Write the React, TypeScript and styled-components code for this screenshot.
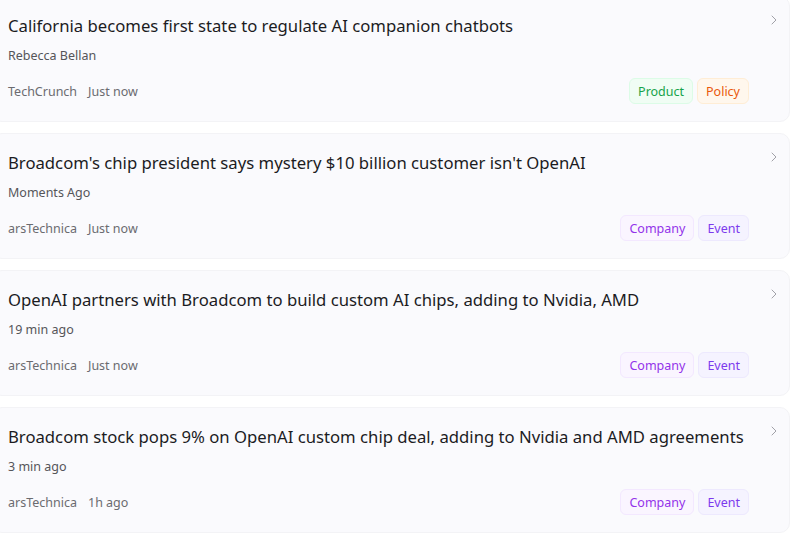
import styled, { createGlobalStyle } from 'styled-components';
import { ChevronRight } from 'lucide-react';

const GlobalStyle = createGlobalStyle`
    body {
        margin: 0;
        background: #ffffff;
        font-family: "Noto Sans", "Open Sans", sans-serif;
        overflow: hidden;
    }
`;

type Tone = 'green' | 'orange' | 'purple' | 'violet';

const tones: Record<Tone, { bg: string; border: string; color: string }> = {
    green: { bg: '#f0fdf4', border: '#dcfce7', color: '#16a34a' },
    orange: { bg: '#fff7ed', border: '#ffedd5', color: '#ea580c' },
    purple: { bg: '#faf5ff', border: '#f3e8ff', color: '#9333ea' },
    violet: { bg: '#f5f3ff', border: '#ede9fe', color: '#7c3aed' },
};

const tagTone: Record<string, Tone> = {
    Product: 'green',
    Policy: 'orange',
    Company: 'purple',
    Event: 'violet',
};

const items = [
    {
        title: 'California becomes first state to regulate AI companion chatbots',
        sub: 'Rebecca Bellan',
        source: 'TechCrunch',
        time: 'Just now',
        tags: ['Product', 'Policy'],
    },
    {
        title: "Broadcom's chip president says mystery $10 billion customer isn't OpenAI",
        sub: 'Moments Ago',
        source: 'arsTechnica',
        time: 'Just now',
        tags: ['Company', 'Event'],
    },
    {
        title: 'OpenAI partners with Broadcom to build custom AI chips, adding to Nvidia, AMD',
        sub: '19 min ago',
        source: 'arsTechnica',
        time: 'Just now',
        tags: ['Company', 'Event'],
    },
    {
        title: 'Broadcom stock pops 9% on OpenAI custom chip deal, adding to Nvidia and AMD agreements',
        sub: '3 min ago',
        source: 'arsTechnica',
        time: '1h ago',
        tags: ['Company', 'Event'],
    },
];

const List = styled.div`
    display: flex;
    flex-direction: column;
    gap: 11px;
    margin: -4px 10px 0 -8px;
`;

const Card = styled.div`
    position: relative;
    background: #fafafd;
    border: 1px solid #f3f3f6;
    border-radius: 10px;
    padding: 17px 40px 18px 15px;
`;

const Title = styled.h3`
    margin: 0;
    font-size: 16.7px;
    font-weight: 400;
    line-height: 24px;
    color: #1c1c1f;
    white-space: nowrap;
`;

const Sub = styled.div`
    margin-top: 9px;
    font-size: 12.5px;
    line-height: 18px;
    color: #555559;
`;

const Footer = styled.div`
    margin-top: 14px;
    display: flex;
    align-items: center;
    justify-content: space-between;
    height: 24px;
`;

const Meta = styled.div`
    display: flex;
    gap: 11px;
    font-size: 12.5px;
    color: #6b6b70;
`;

const Tags = styled.div`
    display: flex;
    gap: 4px;
`;

const Tag = styled.span<{ $tone: Tone }>`
    display: inline-flex;
    align-items: center;
    height: 24px;
    padding: 0 8px;
    border-radius: 6px;
    font-size: 12.5px;
    background: ${(p) => tones[p.$tone].bg};
    border: 1px solid ${(p) => tones[p.$tone].border};
    color: ${(p) => tones[p.$tone].color};
`;

const Arrow = styled.span`
    position: absolute;
    top: 15px;
    right: 7px;
    color: #a1a1a8;
    display: flex;
`;

export default function App() {
    return (
        <>
            <GlobalStyle />
            <List>
                {items.map((item, index) => (
                    <Card key={item.title + index}>
                        <Title>{item.title}</Title>
                        <Sub>{item.sub}</Sub>
                        <Footer>
                            <Meta>
                                <span>{item.source}</span>
                                <span>{item.time}</span>
                            </Meta>
                            <Tags>
                                {item.tags.map((tag) => (
                                    <Tag key={tag} $tone={tagTone[tag]}>{tag}</Tag>
                                ))}
                            </Tags>
                        </Footer>
                        <Arrow>
                            <ChevronRight size={16} strokeWidth={1.5} />
                        </Arrow>
                    </Card>
                ))}
            </List>
        </>
    );
}
